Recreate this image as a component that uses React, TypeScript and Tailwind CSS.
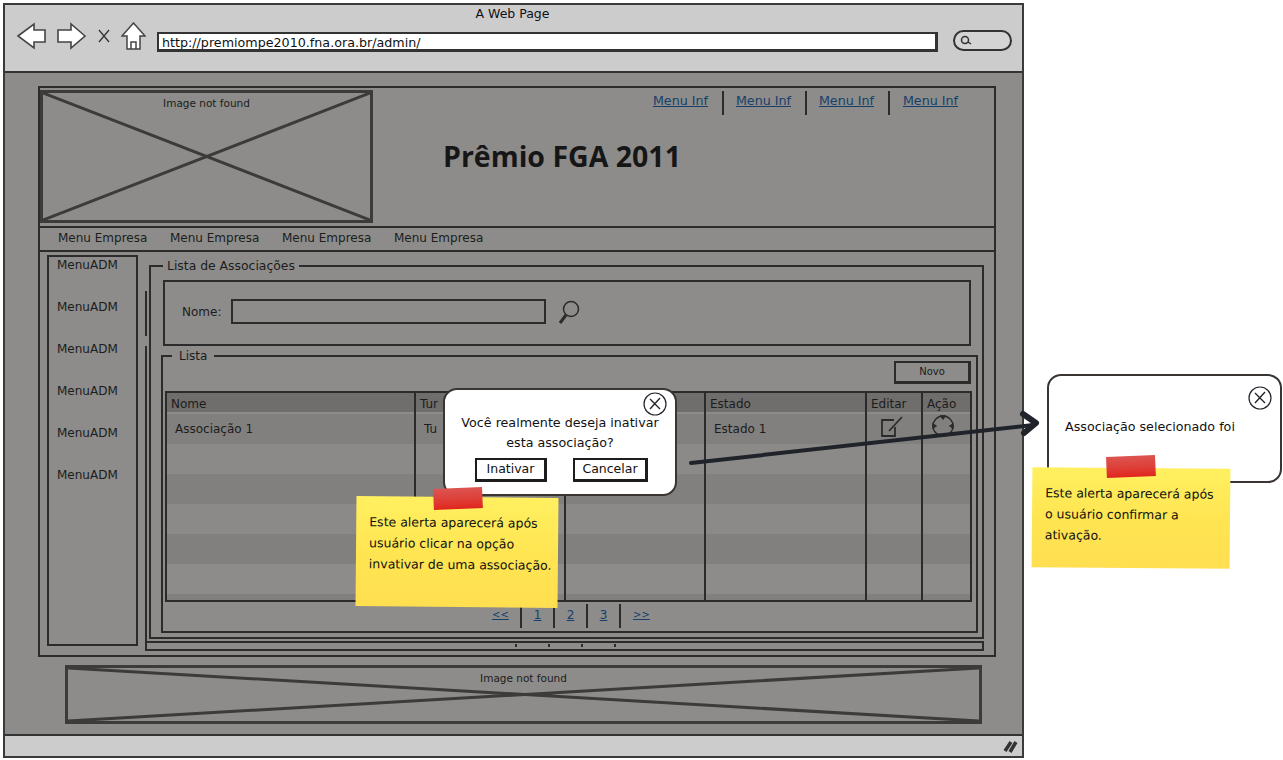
import React from 'react';

const font = { fontFamily: '"Comic Sans MS", "DejaVu Sans", sans-serif' };

const rows = ['bg-[#81807e]', 'bg-[#8b8a88]', 'bg-[#81807e]', 'bg-[#8b8a88]', 'bg-[#81807e]', 'bg-[#8d8c8a]'];
const sideItems = ['MenuADM', 'MenuADM', 'MenuADM', 'MenuADM', 'MenuADM', 'MenuADM'];
const pages = [
    { label: '<<', cell: 'pr-[8px] text-[10px]' },
    { label: '1', cell: 'text-[12px]' },
    { label: '2', cell: 'text-[12px]' },
    { label: '3', cell: 'text-[12px]' },
    { label: '>>', cell: 'pl-[8px] text-[10px]' },
];

function BrokenImage({ className }: { className: string }) {
    return (
        <div className={`relative border-[3px] border-[#3c3b3a] ${className}`}>
            <svg className="absolute inset-0 w-full h-full" preserveAspectRatio="none" viewBox="0 0 100 100">
                <path d="M0 0L100 100M100 0L0 100" stroke="#3c3b3a" strokeWidth="3" vectorEffect="non-scaling-stroke" fill="none" />
            </svg>
            <p className="relative text-center text-[10.5px] leading-none pt-[5px] text-[#1c1c1c]">Image not found</p>
        </div>
    );
}

function Sticky({ className, tape, lines }: { className: string; tape: string; lines: string[] }) {
    return (
        <div className={`absolute bg-gradient-to-b from-[#fff060] via-[#ffe552] to-[#ffdf50] ${className}`}>
            <div className={`absolute w-[49px] h-[21px] bg-gradient-to-b from-[#dc5450] to-[#e0241c] -rotate-3 ${tape}`} />
            {lines.map((line, i) => (
                <p key={i} className="text-[12.5px] leading-[21px] text-[#111] whitespace-nowrap">{line}</p>
            ))}
        </div>
    );
}

function CloseCircle({ className }: { className: string }) {
    return (
        <svg className={`absolute ${className}`} width="24" height="24" viewBox="0 0 24 24" fill="none" stroke="#22252c">
            <circle cx="12" cy="12" r="11" strokeWidth="1.2" />
            <path d="M7 7L17 17M17 6L7 17" strokeWidth="1.4" />
        </svg>
    );
}

function SketchButton({ label, width }: { label: string; width: string }) {
    return (
        <button className={`h-[24px] ${width} bg-white border-2 border-[#1d1d1d] border-r-[3px] border-b-[3px] text-[12.5px] leading-none text-[#111]`}>
            {label}
        </button>
    );
}

function SketchNovo() {
    return (
        <button className="h-[23px] w-[77px] border-2 border-[#2b2b2b] border-r-[3px] border-b-[3px] text-[10px] leading-none text-[#1c1c1c] -mt-[2px]">
            Novo
        </button>
    );
}

export default function App() {
    return (
        <div className="relative w-[1283px] h-[760px] bg-white overflow-hidden pt-[3px] pl-[3px]" style={font}>
            {/* Browser window */}
            <div className="w-[1021px] h-[755px] flex flex-col border-2 border-[#3a3a3a]">
                <div className="h-[68px] bg-[#cccccc] border-b-2 border-[#333] shrink-0">
                    <p className="text-center text-[12.5px] leading-none pt-[3px] pr-[2px] text-[#111]">A Web Page</p>
                    <div className="flex items-center -mt-[1px] pl-[12px]">
                        <svg width="30" height="28" viewBox="0 0 30 28" fill="white" stroke="#444" strokeWidth="1.6" className="mr-[10px]">
                            <path d="M1 14L17 2V8H28V20H17V26Z" />
                        </svg>
                        <svg width="29" height="28" viewBox="0 0 29 28" fill="white" stroke="#444" strokeWidth="1.6" className="mr-[11px]">
                            <path d="M28 14L14 2V8H1V20H14V26Z" />
                        </svg>
                        <svg width="14" height="16" viewBox="0 0 14 16" fill="none" stroke="#333" strokeWidth="1.3" className="mr-[10px]">
                            <path d="M2 2L12 14M12 2L2 14" />
                        </svg>
                        <svg width="25" height="28" viewBox="0 0 25 28" fill="white" stroke="#444" strokeWidth="1.5" className="mr-[11px]">
                            <path d="M12.5 1L24 14H19V27H6V14H1ZM10 27V20H15V27" />
                        </svg>
                        <div className="w-[781px] h-[20px] mt-[12px] bg-white border-2 border-[#333] border-r-[3px] border-b-[3px] text-[12.7px] leading-[17px] pl-[3px] text-[#111] overflow-hidden">
                            http://premiompe2010.fna.ora.br/admin/
                        </div>
                        <div className="ml-[15px] w-[59px] h-[21px] mt-[9px] rounded-full border-2 border-[#333] bg-[#d4d4d4] flex items-center pl-[5px]">
                            <svg width="12" height="10" viewBox="0 0 12 10" fill="none" stroke="#333" strokeWidth="1.5">
                                <circle cx="5" cy="5" r="3.5" />
                                <path d="M8 7L11 9" />
                            </svg>
                        </div>
                    </div>
                </div>

                <div className="flex-1 bg-[#8d8c8a] pl-[33px] pr-[26px] pt-[13px] text-[#1c1c1c] min-h-0">
                    {/* Header */}
                    <div className="h-[140px] border-2 border-b-0 border-[#2b2b2b] flex pt-[2px]">
                        <BrokenImage className="w-[333px] h-[133px] shrink-0" />
                        <div className="flex-1 flex flex-col">
                            <div className="flex justify-end pr-[21px] pt-[1px]">
                                {[0, 1, 2, 3].map((i) => (
                                    <div key={i} className={`h-[24px] w-[83px] flex justify-end ${i < 3 ? 'pr-[14px] border-r-2 border-[#2b2b2b]' : 'pr-[15px]'}`}>
                                        <a className="text-[12.7px] leading-[20px] underline text-[#163f6b] whitespace-nowrap">Menu Inf</a>
                                    </div>
                                ))}
                            </div>
                            <h1 className="text-[28.5px] leading-none font-bold text-[#161616] pl-[70px] pt-[27px] whitespace-nowrap" style={{ fontFamily: '"Open Sans", sans-serif' }}>Prêmio FGA 2011</h1>
                        </div>
                    </div>

                    {/* Company menu */}
                    <div className="h-[26px] border-2 border-[#2b2b2b] flex pl-[18px] pb-[2px] gap-[24px] items-center">
                        {[0, 1, 2, 3].map((i) => (
                            <span key={i} className="w-[88px] text-[12px] whitespace-nowrap">Menu Empresa</span>
                        ))}
                    </div>

                    {/* Main */}
                    <div className="h-[405px] border-2 border-t-0 border-[#2b2b2b] flex pl-[7px] pt-[3px] gap-[8px]">
                        <div className="w-[91px] h-[391px] border-2 border-[#2b2b2b] shrink-0 pt-[1px]">
                            {sideItems.map((label, i) => (
                                <p key={i} className="h-[42px] pl-[8px] text-[12px] leading-[14px]">{label}</p>
                            ))}
                        </div>
                        <div className="relative w-[838px] shrink-0 flex flex-col">
                            <span className="absolute -left-[1px] top-[36px] w-[2px] h-[45px] bg-[#2b2b2b]" />
                            <span className="absolute -left-[1px] top-[91px] w-[2px] h-[305px] bg-[#2b2b2b]" />
                            <fieldset className="h-[380px] border-2 border-[#2b2b2b] ml-[3px] mt-[4px] pl-[12px] pr-[11px] pt-[8px]">
                                <legend className="px-[4px] text-[12.4px] leading-[14px] whitespace-nowrap">Lista de Associações</legend>
                                <div className="h-[66px] border-2 border-[#2b2b2b] flex items-center pl-[17px] gap-[10px] -mt-[1px]">
                                    <span className="text-[12px] -mt-[2px]">Nome:</span>
                                    <div className="w-[315px] h-[25px] -mt-[4px] border-2 border-[#2b2b2b]" />
                                    <svg width="22" height="26" viewBox="0 0 22 26" fill="none" stroke="#2b2b2b" className="ml-[2px]">
                                        <circle cx="13" cy="9" r="7.5" strokeWidth="1.5" />
                                        <path d="M8 15L2 23" strokeWidth="3" />
                                    </svg>
                                </div>
                                <fieldset className="h-[284px] border-2 border-[#2b2b2b] mt-[4px] -ml-[2px] -mr-[7px] pl-[2px] pr-[4px] -translate-y-[1px]">
                                    <legend className="ml-[7px] px-[7px] text-[12px] leading-[14px]">Lista</legend>
                                    <div className="flex justify-end pr-[1px]">
                                        <SketchNovo />
                                    </div>
                                    <div className="mt-[7px] h-[211px] border-2 border-[#2b2b2b]">
                                        <div className="grid grid-cols-[249px_150px_140px_161px_56px_1fr] h-[21px] text-[12px] leading-[22px]">
                                            {['Nome', 'Tur', '', 'Estado', 'Editar', 'Ação'].map((h, i) => (
                                                <div key={i} className={i < 5 ? 'border-r-2 border-[#2b2b2b]' : ''}>
                                                    <span className="block h-[19px] bg-[#6f6e6c] pl-[4px] whitespace-nowrap">{h}</span>
                                                </div>
                                            ))}
                                        </div>
                                        {rows.map((bg, r) => (
                                            <div key={r} className={`grid grid-cols-[249px_150px_140px_161px_56px_1fr] h-[30px] ${bg} text-[12px] leading-[30px]`}>
                                                {[0, 1, 2, 3, 4, 5].map((c) => (
                                                    <div key={c} className={`flex items-center pl-[8px] whitespace-nowrap overflow-hidden ${c < 5 ? 'border-r-2 border-[#2b2b2b]' : ''}`}>
                                                        {r === 0 && c === 0 && 'Associação 1'}
                                                        {r === 0 && c === 1 && 'Tu'}
                                                        {r === 0 && c === 3 && 'Estado 1'}
                                                        {r === 0 && c === 4 && (
                                                            <svg width="24" height="22" viewBox="0 0 24 22" fill="none" stroke="#2b2b2b" strokeWidth="1.8" className="ml-[5px] -mt-[4px]">
                                                                <path d="M14 4H2V20H15V11M9 15L22 1" />
                                                            </svg>
                                                        )}
                                                        {r === 0 && c === 5 && (
                                                            <svg width="24" height="22" viewBox="0 0 24 22" fill="none" stroke="#2b2b2b" strokeWidth="1.4" className="-mt-[7px]">
                                                                <circle cx="12" cy="11" r="10" />
                                                                <path d="M10 1H14L12 4ZM2 9V13L5 11ZM22 9V13L19 11Z" fill="#2b2b2b" />
                                                            </svg>
                                                        )}
                                                    </div>
                                                ))}
                                            </div>
                                        ))}
                                        <div className="grid grid-cols-[249px_150px_140px_161px_56px_1fr] h-[6px] bg-[#81807e]">
                                            {[0, 1, 2, 3, 4].map((c) => (
                                                <div key={c} className="border-r-2 border-[#2b2b2b]" />
                                            ))}
                                        </div>
                                    </div>
                                    <div className="flex justify-center pt-[2px] pl-[6px] leading-[22px] text-[#163f6b]">
                                        {pages.map((p, i) => (
                                            <div key={i} className={`h-[24px] w-[33px] text-center ${p.cell} ${i < 4 ? 'border-r-2 border-[#2b2b2b]' : ''}`}>
                                                <a className="underline">{p.label}</a>
                                            </div>
                                        ))}
                                    </div>
                                </fieldset>
                            </fieldset>
                            <div className="mt-[2px] h-[10px] border-2 border-[#2b2b2b] -ml-[1px] flex justify-center gap-[31px] pl-[2px] pt-[1px]">
                                {[0, 1, 2, 3].map((i) => (
                                    <span key={i} className="w-[2px] h-[3px] bg-[#2b2b2b]" />
                                ))}
                            </div>
                        </div>
                    </div>

                    {/* Footer image */}
                    <div className="pt-[8px] pl-[27px]">
                        <BrokenImage className="w-[917px] h-[59px]" />
                    </div>
                </div>

                <div className="h-[22px] bg-[#cccccc] border-t-2 border-[#333] shrink-0 flex justify-end items-center pr-[3px]">
                    <svg width="16" height="15" viewBox="0 0 16 15" fill="none" stroke="#333" strokeWidth="3.5">
                        <path d="M2 12L8 3M7 13L13 3" />
                    </svg>
                </div>
            </div>

            {/* Confirm dialog */}
            <div className="absolute left-[443px] top-[388px] w-[234px] h-[108px] bg-white rounded-[14px] border-2 border-[#3a3433] pt-[23px] text-center">
                <CloseCircle className="right-[8px] top-[2px]" />
                <p className="text-[12.7px] leading-[20px] text-[#111]">Você realmente deseja inativar</p>
                <p className="text-[12.7px] leading-[20px] text-[#111]">esta associação?</p>
                <div className="flex justify-center gap-[26px] mt-[5px] pl-[3px]">
                    <SketchButton label="Inativar" width="w-[72px]" />
                    <SketchButton label="Cancelar" width="w-[75px]" />
                </div>
            </div>

            {/* Success dialog */}
            <div className="absolute left-[1047px] top-[374px] w-[235px] h-[109px] bg-white rounded-[14px] border-2 border-[#3a3433] pl-[16px] pt-[41px]">
                <CloseCircle className="right-[8px] top-[10px]" />
                <p className="text-[12.7px] leading-[20px] text-[#111] whitespace-nowrap">Associação selecionado foi</p>
            </div>

            <Sticky
                className="left-[356px] top-[497px] w-[202px] h-[110px] pt-[15px] pl-[13px] rotate-[0.5deg]"
                tape="left-[77px] -top-[9px]"
                lines={['Este alerta aparecerá após', 'usuário clicar na opção', 'invativar de uma associação.']}
            />
            <Sticky
                className="left-[1032px] top-[468px] w-[198px] h-[100px] pt-[15px] pl-[13px] rotate-[0.5deg]"
                tape="left-[74px] -top-[12px]"
                lines={['Este alerta aparecerá após', 'o usuário confirmar a', 'ativação.']}
            />

            {/* Arrow between dialogs */}
            <svg className="absolute left-[685px] top-[405px]" width="360" height="65" viewBox="0 0 360 65" fill="none" stroke="#20232a" strokeWidth="4" strokeLinecap="round" strokeLinejoin="round">
                <path d="M6 58L348 20" />
                <path d="M338 9L351 18L339 28" strokeWidth="6" />
            </svg>
        </div>
    );
}
